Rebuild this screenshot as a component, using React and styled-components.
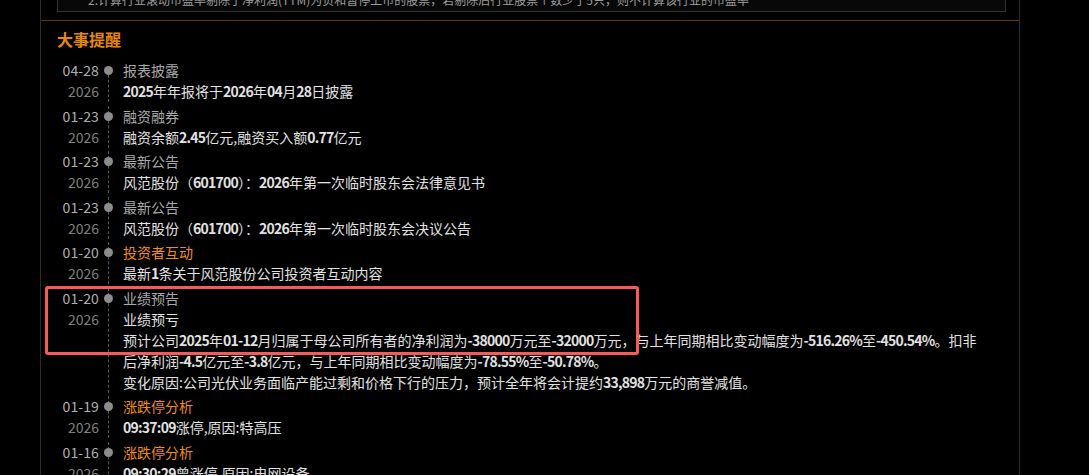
import React from 'react';
import styled, { createGlobalStyle } from 'styled-components';

const Global = createGlobalStyle`
  html, body { margin: 0; padding: 0; background: #000; }
  body {
    font-family: "Noto Sans CJK SC", "Microsoft YaHei", sans-serif;
    overflow: hidden;
  }
`;

const Panel = styled.div`
  margin-left: 40px;
  width: 978px;
  height: 475px;
  border-left: 1px solid #2c2c2c;
  border-right: 1px solid #2c2c2c;
  overflow: hidden;
`;

const NoteBox = styled.div`
  margin: -12px 13px 0 16px;
  border: 1px solid #333;
  background: #080808;
  padding: 0 0 0 30px;
  font-size: 12px;
  line-height: 22px;
  color: #9d9d9d;
  white-space: nowrap;
  overflow: hidden;
`;

const Section = styled.section`
  margin-top: 8px;
  border-top: 1px solid #5e3610;
`;

const SectionTitle = styled.h2`
  margin: 0;
  padding: 6px 0 0 16px;
  font-size: 16px;
  line-height: 24px;
  font-weight: 700;
  color: #e8870e;
`;

const Timeline = styled.div`
  margin-top: 9px;
  font-size: 14px;
  line-height: 21px;
`;

const Item = styled.div`
  position: relative;
  display: grid;
  grid-template-columns: 58px 24px 1fr;
  padding-bottom: 3.5px;
`;

const DateCol = styled.div`
  text-align: right;
`;

const Day = styled.div`
  color: #b0b0b0;
  letter-spacing: 0.1px;
`;

const Year = styled.div`
  color: #808080;
`;

const Rail = styled.div`
  position: relative;
  &::before {
    content: "";
    position: absolute;
    left: 9px;
    top: ${p => (p.$first ? '10px' : '0')};
    bottom: 0;
    border-left: 1px dashed #585858;
  }
`;

const Dot = styled.span`
  position: absolute;
  left: 5px;
  top: 6px;
  width: 9px;
  height: 9px;
  border-radius: 50%;
  background: #8c8c8c;
`;

const Body = styled.div`
  padding-right: 36px;
  min-width: 0;
`;

const Title = styled.div`
  color: ${p => (p.$accent ? '#f0900c' : '#a9a9a9')};
`;

const Line = styled.div`
  color: #e2e2e2;
`;

const Num = styled.span`
  font-weight: 700;
  letter-spacing: -0.75px;
`;

const Highlight = styled.div`
  position: absolute;
  left: 4px;
  top: -2px;
  width: 594px;
  height: 69px;
  box-sizing: border-box;
  border: 3px solid #f65a5a;
  border-radius: 3px;
  pointer-events: none;
`;

function Rich({ text }) {
  const parts = text.split(/(-?[0-9][0-9.,:%\-]*)/);
  return (
    <>
      {parts.map((p, i) =>
        i % 2 === 1 ? <Num key={i}>{p}</Num> : <React.Fragment key={i}>{p}</React.Fragment>
      )}
    </>
  );
}

const events = [
  { day: '04-28', year: '2026', title: '报表披露', lines: ['2025年年报将于2026年04月28日披露'] },
  { day: '01-23', year: '2026', title: '融资融券', lines: ['融资余额2.45亿元,融资买入额0.77亿元'] },
  { day: '01-23', year: '2026', title: '最新公告', lines: ['风范股份（601700）：2026年第一次临时股东会法律意见书'] },
  { day: '01-23', year: '2026', title: '最新公告', lines: ['风范股份（601700）：2026年第一次临时股东会决议公告'] },
  { day: '01-20', year: '2026', title: '投资者互动', accent: true, lines: ['最新1条关于风范股份公司投资者互动内容'] },
  {
    day: '01-20',
    year: '2026',
    title: '业绩预告',
    highlight: true,
    lines: [
      '业绩预亏',
      '预计公司2025年01-12月归属于母公司所有者的净利润为-38000万元至-32000万元，与上年同期相比变动幅度为-516.26%至-450.54%。扣非后净利润-4.5亿元至-3.8亿元，与上年同期相比变动幅度为-78.55%至-50.78%。',
      '变化原因:公司光伏业务面临产能过剩和价格下行的压力，预计全年将会计提约33,898万元的商誉减值。',
    ],
  },
  { day: '01-19', year: '2026', title: '涨跌停分析', accent: true, lines: ['09:37:09涨停,原因:特高压'] },
  { day: '01-16', year: '2026', title: '涨跌停分析', accent: true, lines: ['09:30:29曾涨停,原因:电网设备'] },
];

export default function App() {
  return (
    <>
      <Global />
      <Panel>
        <NoteBox>2.计算行业滚动市盈率剔除了净利润(TTM)为负和暂停上市的股票，若剔除后行业股票个数少于5只，则不计算该行业的市盈率</NoteBox>
        <Section>
          <SectionTitle>大事提醒</SectionTitle>
          <Timeline>
            {events.map((e, i) => (
              <Item key={i}>
                <DateCol>
                  <Day>{e.day}</Day>
                  <Year>{e.year}</Year>
                </DateCol>
                <Rail $first={i === 0}>
                  <Dot />
                </Rail>
                <Body>
                  <Title $accent={e.accent}>{e.title}</Title>
                  {e.lines.map((l, j) => (
                    <Line key={j}>
                      <Rich text={l} />
                    </Line>
                  ))}
                </Body>
                {e.highlight && <Highlight />}
              </Item>
            ))}
          </Timeline>
        </Section>
      </Panel>
    </>
  );
}
